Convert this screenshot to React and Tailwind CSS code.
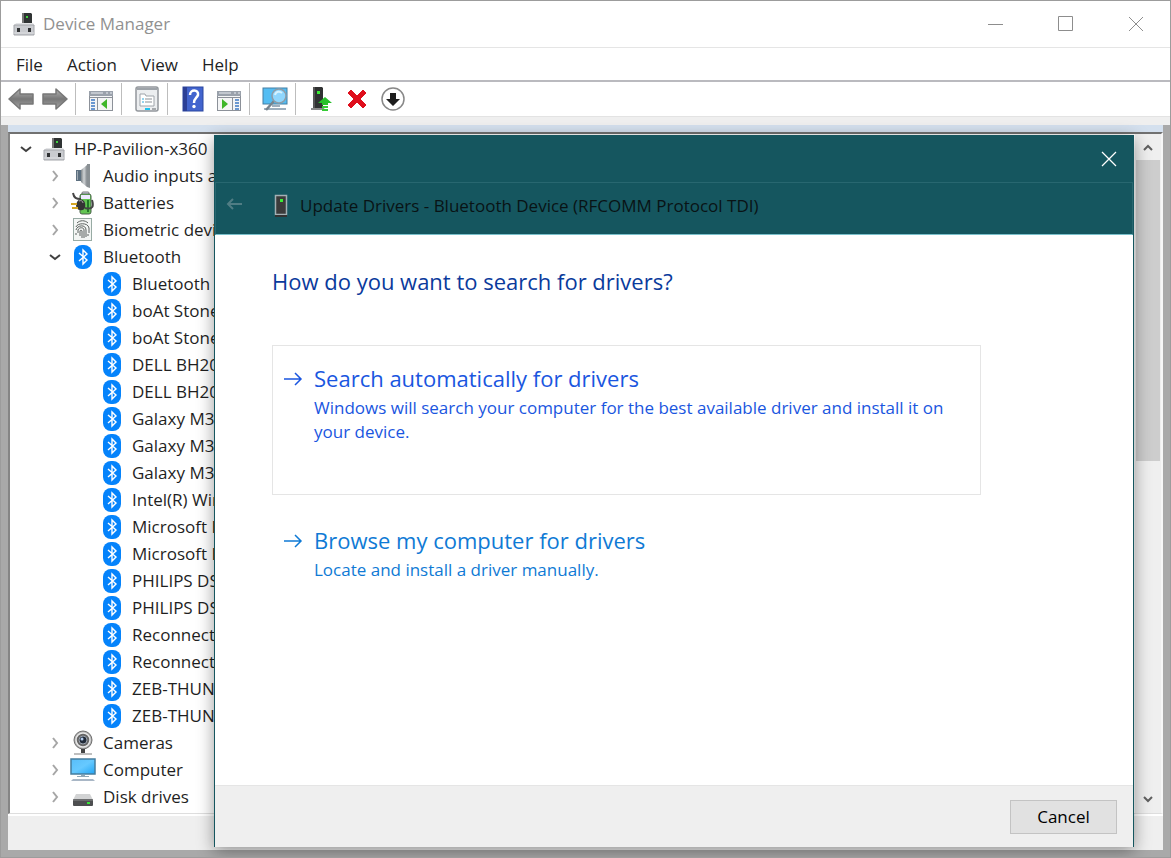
import React from 'react';

const menus = ['File', 'Action', 'View', 'Help'];

const tree = [
  { label: 'HP-Pavilion-x360', icon: 'pc', level: 0, open: true },
  { label: 'Audio inputs and outputs', icon: 'audio', level: 1 },
  { label: 'Batteries', icon: 'battery', level: 1 },
  { label: 'Biometric devices', icon: 'finger', level: 1 },
  { label: 'Bluetooth', icon: 'bluetooth', level: 1, open: true },
  { label: 'Bluetooth Device', icon: 'bluetooth', level: 2 },
  { label: 'boAt Stone', icon: 'bluetooth', level: 2 },
  { label: 'boAt Stone', icon: 'bluetooth', level: 2 },
  { label: 'DELL BH200', icon: 'bluetooth', level: 2 },
  { label: 'DELL BH200', icon: 'bluetooth', level: 2 },
  { label: 'Galaxy M30s', icon: 'bluetooth', level: 2 },
  { label: 'Galaxy M30s', icon: 'bluetooth', level: 2 },
  { label: 'Galaxy M30s', icon: 'bluetooth', level: 2 },
  { label: 'Intel(R) Wireless', icon: 'bluetooth', level: 2 },
  { label: 'Microsoft Bluetooth', icon: 'bluetooth', level: 2 },
  { label: 'Microsoft Bluetooth', icon: 'bluetooth', level: 2 },
  { label: 'PHILIPS DS8', icon: 'bluetooth', level: 2 },
  { label: 'PHILIPS DS8', icon: 'bluetooth', level: 2 },
  { label: 'Reconnect', icon: 'bluetooth', level: 2 },
  { label: 'Reconnect', icon: 'bluetooth', level: 2 },
  { label: 'ZEB-THUNDER', icon: 'bluetooth', level: 2 },
  { label: 'ZEB-THUNDER', icon: 'bluetooth', level: 2 },
  { label: 'Cameras', icon: 'camera', level: 1 },
  { label: 'Computer', icon: 'monitor', level: 1 },
  { label: 'Disk drives', icon: 'disk', level: 1 },
];

const indents = ['pl-2', 'pl-[37px]', 'pl-[66px]'];

const PcIcon = () => (
  <svg viewBox="0 0 22 24" className="w-[22px] h-6">
    <path d="M9 1h9l1 1v10H9z" fill="#2f3333" />
    <path d="M9 1h2v11H9z" fill="#777" />
    <rect x="13" y="4" width="2" height="2" fill="#3fd13f" />
    <path d="M3 11h17l2 3H1z" fill="#e4e5e7" />
    <path d="M1 13h20v10H1z" fill="#c9cbcf" stroke="#a3a5aa" />
    <rect x="4" y="16" width="3" height="4" fill="#303234" />
    <rect x="15" y="16" width="3" height="4" fill="#303234" />
    <path d="M1 21h20" stroke="#dedfe2" />
  </svg>
);

const AudioIcon = () => (
  <svg viewBox="0 0 24 24" className="w-6 h-6">
    <defs>
      <linearGradient id="cone" x1="0" x2="1">
        <stop offset="0" stopColor="#7c8388" />
        <stop offset="0.5" stopColor="#d0d3d5" />
        <stop offset="1" stopColor="#858b90" />
      </linearGradient>
    </defs>
    <path d="M5 6h5v11H5z" fill="#5d7080" />
    <path d="M10 6l6-5v22l-6-5z" fill="url(#cone)" />
    <path d="M16 0h3v24l-3-1z" fill="#8a9094" />
    <path d="M6 7h1v9H6z" fill="#9faab2" />
  </svg>
);

const BatteryIcon = () => (
  <svg viewBox="0 0 24 24" className="w-6 h-6">
    <rect x="11" y="1" width="7" height="3" rx="1" fill="#d9d5ee" stroke="#777" />
    <rect x="9" y="3" width="11" height="20" rx="2" fill="#62c552" stroke="#49604a" />
    <path d="M10 4h9v4h-9z" fill="#eeeaff" />
    <path d="M16 9h2v12h-2z" fill="#207a25" />
    <path d="M2 2c1 5 3 6 8 6M14 17c8 2 9-2 7-8" fill="none" stroke="#454545" strokeWidth="2" />
    <path d="M6 11c2-4 7-3 8 1 1 5-1 8-5 7-2 0-4-2-4-5z" fill="#343434" />
    <path d="M8 10c2-1 4 0 4 2" fill="none" stroke="#aaa" />
    <path d="M0 13h6M1 17h6" stroke="#d4a625" strokeWidth="2" />
  </svg>
);

const FingerIcon = () => (
  <svg viewBox="0 0 24 24" className="w-6 h-6">
    <rect x="2.500" y="0.500" width="18" height="22" fill="#f3f6f4" stroke="#98aba4" />
    <g fill="none" stroke="#5b615e">
      <path d="M6 5c3-3 8-3 11 0M5 9c1-4 12-5 13 1v5M5 12c1-5 10-6 10 0v7M7 15v-3c1-3 6-3 6 0v8M9 18v-5c0-1 2-1 2 0v7M5 15v2M17 16v2" />
    </g>
  </svg>
);

const BluetoothIcon = () => (
  <svg viewBox="0 0 18 24" className="w-[18px] h-6">
    <rect width="18" height="24" rx="8" fill="#0583fb" />
    <path d="M5 8l8 7-4 4V5l4 4-8 7" fill="none" stroke="#fff" strokeWidth="1.400" />
  </svg>
);

const CameraIcon = () => (
  <svg viewBox="0 0 24 26" className="w-6 h-[26px]">
    <circle cx="12" cy="10" r="9" fill="#a8a8a8" stroke="#707070" />
    <circle cx="12" cy="10" r="7" fill="#666" stroke="#e7e7e7" strokeWidth="1.500" />
    <circle cx="12" cy="10" r="4" fill="#202a38" stroke="#9aa2ad" />
    <circle cx="11" cy="9" r="1.500" fill="#b4cdf0" />
    <path d="M10 19h4v4h-4z" fill="#444" />
    <path d="M3 24h18" stroke="#aaa" strokeWidth="1.500" />
  </svg>
);

const MonitorIcon = () => (
  <svg viewBox="0 0 26 24" className="w-[26px] h-6">
    <defs>
      <linearGradient id="screen" x1="0" y1="0" x2="1" y2="1">
        <stop offset="0" stopColor="#58bdf8" />
        <stop offset="0.5" stopColor="#66c9ff" />
        <stop offset="1" stopColor="#21a5f5" />
      </linearGradient>
    </defs>
    <rect x="1" y="1" width="24" height="15" fill="url(#screen)" stroke="#457d9e" strokeWidth="1.500" />
    <path d="M11 17h4v1h4v1H7v-1h4z" fill="#8fa7b6" />
    <path d="M3 21h20l2 2H1z" fill="#a9b7c6" />
  </svg>
);

const DiskIcon = () => (
  <svg viewBox="0 0 22 24" className="w-[22px] h-6">
    <path d="M4 9h14l3 6H1z" fill="#d2d3d4" />
    <rect x="1" y="14" width="20" height="7" rx="1" fill="#4d4e50" />
    <path d="M1 15h20" stroke="#8a8b8c" />
    <rect x="15" y="17" width="3" height="2" fill="#38e338" />
  </svg>
);

const icons = {
  pc: PcIcon,
  audio: AudioIcon,
  battery: BatteryIcon,
  finger: FingerIcon,
  bluetooth: BluetoothIcon,
  camera: CameraIcon,
  monitor: MonitorIcon,
  disk: DiskIcon,
};

const Chevron = ({ open }) => (
  <svg viewBox="0 0 12 12" className="w-3 h-3" fill="none" strokeWidth="2">
    {open ? <path d="M1 4l5 4 5-4" stroke="#404040" /> : <path d="M4 1l4 5-4 5" stroke="#a6a6a6" />}
  </svg>
);

const TreeRow = ({ item }) => {
  const Icon = icons[item.icon];
  return (
    <li className={`flex h-[27px] items-center whitespace-nowrap ${indents[item.level]}`}>
      <span className="flex w-4 shrink-0 justify-center">{item.level < 2 && <Chevron open={item.open} />}</span>
      <span className="flex w-10 shrink-0 justify-center">
        <Icon />
      </span>
      <span>{item.label}</span>
    </li>
  );
};

const ArrowIcon = ({ flip }) => (
  <svg viewBox="0 0 26 24" className="w-[26px] h-6">
    <defs>
      <linearGradient id="metal" x1="0" y1="0" x2="0" y2="1">
        <stop offset="0" stopColor="#b4b4b4" />
        <stop offset="0.5" stopColor="#777" />
        <stop offset="1" stopColor="#a6a6a6" />
      </linearGradient>
    </defs>
    <path
      d={flip ? 'M25 12L14 2v5H1v10h13v5z' : 'M1 12L12 2v5h13v10H12v5z'}
      fill="url(#metal)"
      stroke="#777"
      strokeWidth="1.500"
      strokeLinejoin="round"
    />
  </svg>
);

const ConsoleIcon = ({ flip }) => (
  <svg viewBox="0 0 26 24" className="mt-1 w-[26px] h-6">
    <rect x="1.500" y="2.500" width="23" height="19" fill="#f4f5f6" stroke="#8c9199" />
    <path d="M1 2h24v5H1z" fill="#9aa1ab" />
    <path d="M3 4h12M18 4h2M22 4h2" stroke="#e9edf2" />
    <path d="M2 8.500h22" stroke="#8c9199" />
    <path d={flip ? 'M16.500 8v13' : 'M9.500 8v13'} stroke="#8c9199" />
    <path d={flip ? 'M19 11h4M19 14h4M19 17h4M19 20h4' : 'M3 11h4M3 14h4M3 17h4M3 20h4'} stroke="#3c78c3" strokeWidth="1.500" />
    <path d={flip ? 'M6 10l6 5-6 5z' : 'M19 10l-6 5 6 5z'} fill="#3fb62b" />
  </svg>
);

const PropertiesIcon = () => (
  <svg viewBox="0 0 24 26" className="w-6 h-[26px]">
    <rect x="1" y="1" width="22" height="24" rx="2" fill="#eceef0" stroke="#92979c" strokeWidth="1.500" />
    <path d="M2 3h20" stroke="#9ea3a9" strokeWidth="2" />
    <path d="M5 20V8h5l1 2h8v10z" fill="#fff" stroke="#9fa4aa" />
    <path d="M10 13h7M10 16h7" stroke="#8b8f95" />
    <path d="M7 13h2M7 16h2" stroke="#2ba9df" />
    <path d="M10 23h5" stroke="#1fc3ef" strokeWidth="2" />
    <path d="M17 23h4" stroke="#a6a9ad" strokeWidth="2" />
  </svg>
);

const HelpIcon = () => (
  <svg viewBox="0 0 22 26" className="w-[22px] h-[26px]">
    <rect x="1" y="1" width="20" height="24" fill="#4264ce" stroke="#2a479f" />
    <path d="M1 1h4v24H1z" fill="#2b3f96" />
    <path d="M8 9c0-6 9-6 8 0-1 3-4 3-4 8" fill="none" stroke="#fff" strokeWidth="2.500" />
    <circle cx="12" cy="20.500" r="1.700" fill="#fff" />
  </svg>
);

const ScanIcon = () => (
  <svg viewBox="0 0 26 26" className="w-[26px] h-[26px]">
    <rect x="1" y="2" width="24" height="16" fill="#54bdf3" stroke="#447fa3" />
    <path d="M10 20h8M2 23h22" stroke="#9eafbe" strokeWidth="2" />
    <path d="M12 15l-8 9" stroke="#77838d" strokeWidth="2.500" />
    <circle cx="17" cy="10" r="7" fill="#8fd6fd" stroke="#8e9ca7" strokeWidth="1.500" />
    <path d="M13 9c1-4 5-4 7-2" fill="none" stroke="#d6f2ff" strokeWidth="2" />
  </svg>
);

const UpdateIcon = () => (
  <svg viewBox="0 0 22 26" className="w-[22px] h-[26px]">
    <path d="M3 1h9l1 1v20H3z" fill="#303232" />
    <path d="M3 1h2v21H3z" fill="#555" />
    <path d="M1 22h13l1 2H1z" fill="#8b8b8b" />
    <rect x="7" y="5" width="3" height="3" fill="#3bec35" />
    <path d="M15 11l7 6h-4v2h-6v-2H8z" fill="#27bf2a" />
    <path d="M12 21h6M12 24h6" stroke="#35cb35" strokeWidth="2" />
  </svg>
);

const RemoveIcon = () => (
  <svg viewBox="0 0 22 22" className="w-[22px] h-[22px]">
    <path d="M2 5l3-3 6 6 6-6 3 3-6 6 6 6-3 3-6-6-6 6-3-3 6-6z" fill="#df0e1c" stroke="#df0e1c" />
  </svg>
);

const DisableIcon = () => (
  <svg viewBox="0 0 26 26" className="w-[26px] h-[26px]">
    <circle cx="13" cy="13" r="11" fill="#fff" stroke="#888" strokeWidth="1.500" />
    <path d="M10 7h6v6h4l-7 7-7-7h4z" fill="#1d1d1d" />
  </svg>
);

const ToolButton = ({ label, children }) => (
  <button aria-label={label} className="flex w-7 items-center justify-center">
    {children}
  </button>
);

const ToolGroup = ({ children }) => (
  <div className="flex items-center gap-[11px] pl-1.5">
    <span className="h-8 w-px bg-[#bdbdbd]" />
    <div className="flex items-center gap-2">{children}</div>
  </div>
);

const Toolbar = () => (
  <div className="flex h-[35px] items-center border-b border-[#e3e3e3] bg-white pl-1.5">
    <div className="flex gap-1.5">
      <ToolButton label="Back"><ArrowIcon /></ToolButton>
      <ToolButton label="Forward"><ArrowIcon flip /></ToolButton>
    </div>
    <ToolGroup>
      <ToolButton label="Show console tree"><ConsoleIcon /></ToolButton>
    </ToolGroup>
    <ToolGroup>
      <ToolButton label="Properties"><PropertiesIcon /></ToolButton>
    </ToolGroup>
    <ToolGroup>
      <ToolButton label="Help"><HelpIcon /></ToolButton>
      <ToolButton label="Show action pane"><ConsoleIcon flip /></ToolButton>
    </ToolGroup>
    <ToolGroup>
      <ToolButton label="Scan for hardware changes"><ScanIcon /></ToolButton>
    </ToolGroup>
    <ToolGroup>
      <ToolButton label="Update driver"><UpdateIcon /></ToolButton>
      <ToolButton label="Uninstall device"><RemoveIcon /></ToolButton>
      <ToolButton label="Disable device"><DisableIcon /></ToolButton>
    </ToolGroup>
  </div>
);

const Option = ({ title, text, className }) => (
  <button className={`flex w-full gap-[11px] border pt-4 pr-6 pl-2.5 text-left ${className}`}>
    <svg viewBox="0 0 20 14" className="mt-2.5 h-3.5 w-5 shrink-0" fill="none" stroke="currentColor" strokeWidth="1.500">
      <path d="M1 7h17M12 1l6 6-6 6" />
    </svg>
    <span>
      <span className="mb-0.5 block text-[22px] leading-8">{title}</span>
      <span className="block leading-6">{text}</span>
    </span>
  </button>
);

const UpdateDialog = () => (
  <section className="absolute top-[134px] right-9 bottom-2.5 left-[213px] flex flex-col border-x border-[#15565f] bg-white shadow-[0_4px_16px_rgba(0,0,0,0.4)]">
    <div className="flex h-[47px] shrink-0 items-center justify-end bg-[#15565f] pr-4">
      <button aria-label="Close" className="text-white">
        <svg viewBox="0 0 16 16" className="h-4 w-4" fill="none" stroke="currentColor" strokeWidth="1.250">
          <path d="M1 1l14 14M15 1L1 15" />
        </svg>
      </button>
    </div>
    <div className="flex h-[53px] shrink-0 items-center border border-[#286770] border-b-[#79bfca] bg-[#15565f] pb-1.5 pl-2.5">
      <button aria-label="Back" className="text-[#507d84]">
        <svg viewBox="0 0 16 12" className="mb-1 h-3 w-4" fill="none" stroke="currentColor" strokeWidth="2">
          <path d="M16 6H2M7 1L2 6l5 5" />
        </svg>
      </button>
      <svg viewBox="0 0 14 24" className="ml-8 h-6 w-3.5">
        <rect x="1.500" y="1.500" width="11" height="19" fill="#3b3b3b" stroke="#a3b0b4" strokeWidth="1.500" />
        <rect x="6" y="5" width="3" height="3" fill="#3bec35" />
        <path d="M1 22h12" stroke="#333" strokeWidth="2" />
      </svg>
      <h1 className="ml-3 text-[#091315]">Update Drivers - Bluetooth Device (RFCOMM Protocol TDI)</h1>
    </div>
    <div className="flex-1 pt-7 pr-[152px] pl-[57px]">
      <h2 className="text-[22px] leading-9 text-[#0a3a9c]">How do you want to search for drivers?</h2>
      <Option
        title="Search automatically for drivers"
        text="Windows will search your computer for the best available driver and install it on your device."
        className="mt-[46px] h-[150px] border-[#e5e5e5] text-[#1a56e0]"
      />
      <Option
        title="Browse my computer for drivers"
        text="Locate and install a driver manually."
        className="mt-3 border-transparent text-[#0f7ad5]"
      />
    </div>
    <footer className="flex h-[62px] shrink-0 items-center justify-end border-t border-[#e5e5e5] bg-[#efefef] pr-4">
      <button className="h-[34px] w-[107px] border border-[#c3c3c3] bg-[#e1e1e1] text-black">Cancel</button>
    </footer>
  </section>
);

export default function App() {
  return (
    <main className="relative flex min-h-screen flex-col overflow-hidden border border-[#9c9c9c] bg-[#efefef] font-['Open_Sans',sans-serif] text-[17px] leading-6 text-[#1f1f1f]">
      <header className="flex h-[47px] items-center border-b border-[#e5e5e5] bg-white pl-3">
        <PcIcon />
        <span className="ml-2 text-[#919191]">Device Manager</span>
        <div className="mr-[26px] ml-auto flex gap-[54px] text-[#8d8d8d]">
          <button aria-label="Minimize">
            <svg viewBox="0 0 16 16" className="h-4 w-4" fill="none" stroke="currentColor">
              <path d="M0 8.500h15" />
            </svg>
          </button>
          <button aria-label="Maximize">
            <svg viewBox="0 0 16 16" className="h-4 w-4" fill="none" stroke="currentColor">
              <path d="M0.500 0.500h14v14h-14z" />
            </svg>
          </button>
          <button aria-label="Close window">
            <svg viewBox="0 0 16 16" className="h-4 w-4" fill="none" stroke="currentColor">
              <path d="M1 1l14 14M15 1L1 15" />
            </svg>
          </button>
        </div>
      </header>
      <nav className="flex h-[34px] items-center gap-6 border-b-2 border-[#bababf] bg-white pt-0.5 pl-[15px]">
        {menus.map((menu) => (
          <button key={menu}>{menu}</button>
        ))}
      </nav>
      <Toolbar />
      <div className="mt-2 flex flex-1 flex-col border-x-[7px] border-b-[7px] border-[#a9a9a9]">
        <div className="flex flex-1 flex-col border-t-[7px] border-[#d4e0ee]">
          <div className="flex flex-1 border-t-2 border-r-2 border-b border-l-2 border-t-[#717171] border-r-[#f7f7f7] border-b-[#dedede] border-l-[#858585] bg-white">
            <ul className="min-w-0 flex-1 overflow-hidden pt-px">
              {tree.map((item, i) => (
                <TreeRow key={i} item={item} />
              ))}
            </ul>
            <div className="flex w-[26px] flex-col items-center bg-[#efefef] text-[#606060]">
              <svg viewBox="0 0 10 8" className="mt-2.5 mb-2 h-2 w-2.5" fill="none" stroke="currentColor" strokeWidth="2">
                <path d="M1 6l4-4 4 4" />
              </svg>
              <div className="h-[301px] w-6 bg-[#cdcdcd]" />
              <svg viewBox="0 0 10 8" className="mt-auto mb-2.5 h-2 w-2.5" fill="none" stroke="currentColor" strokeWidth="2">
                <path d="M1 2l4 4 4-4" />
              </svg>
            </div>
          </div>
        </div>
        <div className="h-9 border-t-2 border-white bg-[#efefef]" />
      </div>
      <UpdateDialog />
    </main>
  );
}
